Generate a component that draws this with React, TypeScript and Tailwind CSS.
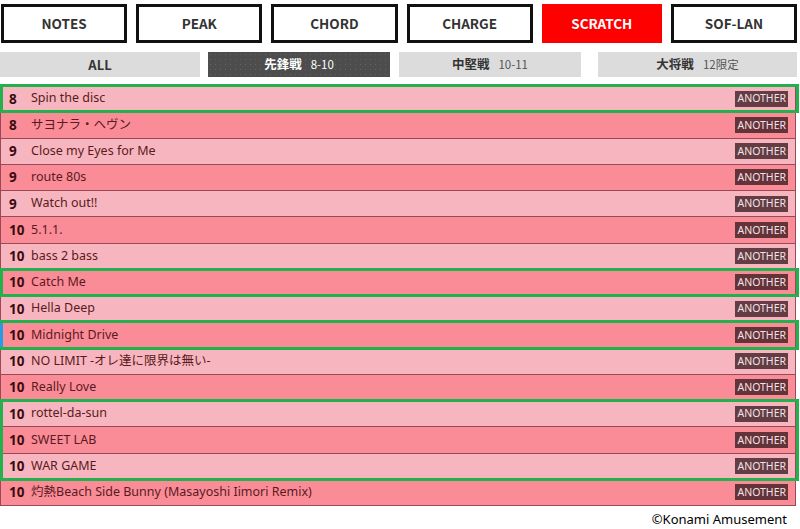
import React from "react";

const songs: [string, string][] = [
  ["8", "Spin the disc"],
  ["8", "サヨナラ・ヘヴン"],
  ["9", "Close my Eyes for Me"],
  ["9", "route 80s"],
  ["9", "Watch out!!"],
  ["10", "5.1.1."],
  ["10", "bass 2 bass"],
  ["10", "Catch Me"],
  ["10", "Hella Deep"],
  ["10", "Midnight Drive"],
  ["10", "NO LIMIT -オレ達に限界は無い-"],
  ["10", "Really Love"],
  ["10", "rottel-da-sun"],
  ["10", "SWEET LAB"],
  ["10", "WAR GAME"],
  ["10", "灼熱Beach Side Bunny (Masayoshi Iimori Remix)"],
];

const ROW = 26.25;

const highlights: { start: number; count: number; blue: boolean }[] = [
  { start: 0, count: 1, blue: false },
  { start: 7, count: 1, blue: false },
  { start: 9, count: 1, blue: true },
  { start: 12, count: 3, blue: false },
];

const font = { fontFamily: '"Noto Sans", "Noto Sans CJK JP", sans-serif' };
const cjk = { fontFamily: '"Noto Sans CJK JP", "Noto Sans", sans-serif' };

export default function App() {
  const buttons = ["NOTES", "PEAK", "CHORD", "CHARGE", "SCRATCH", "SOF-LAN"];
  return (
    <div className="w-[800px] h-[529px] bg-white overflow-hidden" style={font}>
      <div className="flex gap-[9px] pt-[4px] pl-[1px] pr-[3px]">
        {buttons.map((b) =>
          b === "SCRATCH" ? (
            <div
              key={b}
              className="flex-1 h-[39px] bg-[#ff0000] flex items-center justify-center text-white font-bold text-[13.5px]"
              style={cjk}
            >
              {b}
            </div>
          ) : (
            <div
              key={b}
              className="flex-1 h-[39px] bg-white border-[3px] border-[#111] flex items-center justify-center text-[#333] font-bold text-[13.5px]"
              style={cjk}
            >
              {b}
            </div>
          )
        )}
      </div>

      <div className="flex mt-[9px] h-[25px] text-[12.5px]" style={cjk}>
        <div className="w-[200px] bg-[#dcdcdc] flex items-center justify-center font-bold text-[#333] text-[13px]">
          ALL
        </div>
        <div
          className="ml-[8px] w-[182px] bg-[#4d4d4d] flex items-center justify-center text-white"
          style={{
            backgroundImage: "radial-gradient(rgba(255,255,255,0.12) 0.6px, transparent 0.8px)",
            backgroundSize: "5px 5px",
          }}
        >
          <span className="font-bold">先鋒戦</span>
          <span className="ml-[9px] text-[11.5px]">8-10</span>
        </div>
        <div className="ml-[9px] w-[182px] bg-[#dcdcdc] flex items-center justify-center text-[#333]">
          <span className="font-bold">中堅戦</span>
          <span className="ml-[9px] text-[11.5px] text-[#555]">10-11</span>
        </div>
        <div className="ml-[17px] w-[199px] bg-[#dcdcdc] flex items-center justify-center text-[#333]">
          <span className="font-bold">大将戦</span>
          <span className="ml-[9px] text-[11.5px] text-[#555]">12限定</span>
        </div>
      </div>

      <div className="relative mt-[9px] w-[796px]">
        <div className="border-l border-r border-[#9a4a55]">
          {songs.map(([lv, title], i) => (
            <div
              key={i}
              className={`flex items-center border-b border-[#9a4a55] ${
                i % 2 === 0 ? "bg-[#f7b6bf]" : "bg-[#fa8c98]"
              }`}
              style={{ height: ROW }}
            >
              <div className="w-[30px] pl-[8px] font-bold text-[13.5px] text-[#3a0c10]">{lv}</div>
              <div className="flex-1 text-[12.5px] text-[#5a1a20] whitespace-nowrap">{title}</div>
              <div className="mr-[7px] h-[16px] px-[2px] flex items-center bg-[rgba(50,20,25,0.75)] text-[#f2e2e4] text-[10.5px] leading-none">
                ANOTHER
              </div>
            </div>
          ))}
        </div>
        {highlights.map((h, k) => (
          <div
            key={k}
            className="absolute left-0 w-[799px] border-[3px] border-[#22b14c] pointer-events-none"
            style={{ top: h.start * ROW - 2, height: h.count * ROW + 3 }}
          >
            {h.blue && <div className="absolute left-[-3px] top-0 bottom-0 w-[3px] bg-[#2a9be0]" />}
          </div>
        ))}
      </div>

      <div className="flex justify-end pr-[13px] pt-[4px] text-[13px] text-black" style={font}>
        ©Konami Amusement
      </div>
    </div>
  );
}
